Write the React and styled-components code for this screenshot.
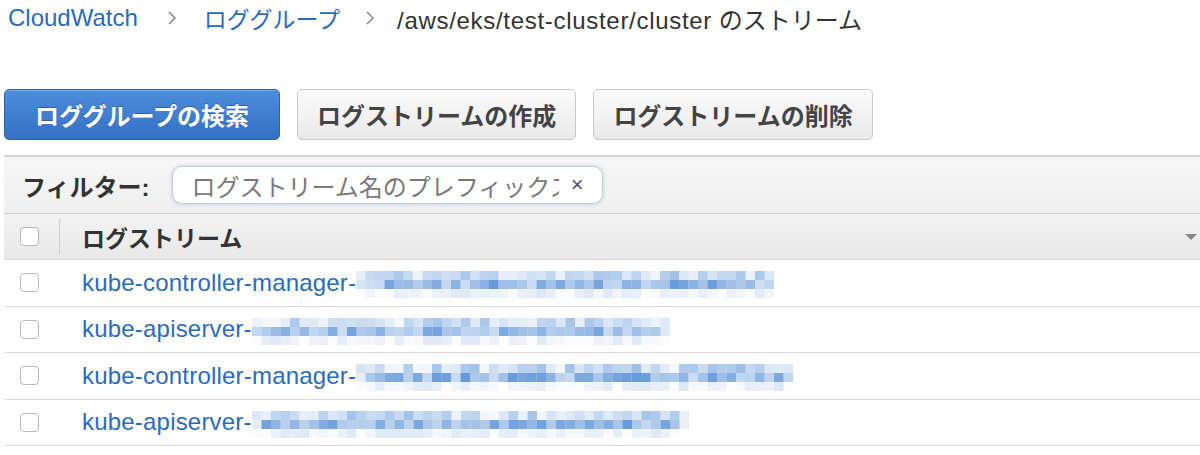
import React from "react";
import styled, { createGlobalStyle } from "styled-components";

const GlobalStyle = createGlobalStyle`
  html, body {
    margin: 0;
    background: #fff;
    overflow: hidden;
  }
  body {
    font-family: "Liberation Sans", "Noto Sans CJK JP", sans-serif;
    color: #333;
  }
`;

const Page = styled.div`
  width: 1200px;
  height: 455px;
  overflow: hidden;
`;

const Breadcrumb = styled.nav`
  display: flex;
  align-items: center;
  height: 36px;
  padding-left: 8px;
  font-size: 24px;
  white-space: nowrap;
`;

const Crumb = styled.a`
  font-size: ${(p) => p.$size || 24}px;
  color: ${(p) => (p.$current ? "#333" : "#2a6bc0")};
  text-decoration: none;
`;

const LogPath = styled.span`
  letter-spacing: 0.7px;
`;

const Sep = styled.span`
  display: inline-flex;
  width: 12px;
  margin: 0 ${(p) => p.$right || 26}px 0 ${(p) => p.$left || 28}px;
  color: #888;
`;

const Toolbar = styled.div`
  display: flex;
  gap: 17px;
  margin: 53px 0 0 4px;
`;

const Button = styled.button`
  height: 51px;
  padding: 0 ${(p) => (p.$primary ? 30 : 19)}px;
  border-radius: 5px;
  font-family: "Liberation Sans", "Noto Sans CJK JP", sans-serif;
  font-size: 24px;
  font-weight: 700;
  cursor: pointer;
  color: ${(p) => (p.$primary ? "#fff" : "#444")};
  border: 1px solid ${(p) => (p.$primary ? "#2d63ad" : "#c9c9c9")};
  background: ${(p) =>
    p.$primary
      ? "linear-gradient(#4d8ddb, #3470c4)"
      : "linear-gradient(#fbfbfb, #e9e9e9)"};
  text-shadow: ${(p) => (p.$primary ? "0 -1px 0 rgba(0,0,0,0.25)" : "none")};
  box-shadow: ${(p) =>
    p.$primary ? "inset 0 1px 0 rgba(255,255,255,0.25)" : "inset 0 1px 0 #fff"};
`;

const Table = styled.div`
  margin: 15px 0 0 4px;
  width: 1210px;
`;

const FilterBar = styled.div`
  display: flex;
  align-items: center;
  height: 56px;
  padding-left: 18px;
  border-top: 2px solid #d3d3d3;
  background: linear-gradient(#f7f7f7, #efefef);
`;

const FilterLabel = styled.span`
  font-size: 24px;
  font-weight: 700;
  color: #333;
`;

const SearchBox = styled.div`
  display: flex;
  align-items: center;
  width: 431px;
  height: 38px;
  margin-left: 22px;
  padding: 0 18px 0 19px;
  box-sizing: border-box;
  background: #fff;
  border: 1px solid #c5cdd8;
  border-radius: 10px;
  box-shadow: 0 0 4px rgba(120, 160, 220, 0.45);
`;

const Placeholder = styled.span`
  flex: 1;
  min-width: 0;
  overflow: hidden;
  white-space: nowrap;
  font-size: 24px;
  color: #7a7a7a;
`;

const Clear = styled.span`
  margin-left: 12px;
  font-size: 22px;
  color: #555;
`;

const HeaderRow = styled.div`
  display: flex;
  align-items: center;
  height: 45px;
  border-top: 1px solid #cfcfcf;
  border-bottom: 1px solid #d9d9d9;
  background: linear-gradient(#f3f3f3, #e8e8e8);
  position: relative;
`;

const CheckCell = styled.div`
  display: flex;
  align-items: center;
  width: 56px;
  padding-left: 16px;
  box-sizing: border-box;
  align-self: stretch;
  border-right: ${(p) => (p.$divider ? "1px solid #cfcfcf" : "none")};
  margin: ${(p) => (p.$divider ? "5px 0" : "0")};
`;

const Box = styled.span`
  display: inline-block;
  width: 19px;
  height: 19px;
  box-sizing: border-box;
  border: 1px solid #b9b9b9;
  border-radius: 4px;
  background: #fff;
`;

const HeaderTitle = styled.span`
  margin-left: 22px;
  font-size: 23px;
  font-weight: 700;
  color: #333;
`;

const SortArrow = styled.span`
  position: absolute;
  right: 17px;
  top: 20px;
  width: 0;
  height: 0;
  border-left: 6px solid transparent;
  border-right: 6px solid transparent;
  border-top: 6px solid #888;
`;

const Row = styled.div`
  display: flex;
  align-items: center;
  height: 45.5px;
  border-bottom: 1px solid #dcdcdc;
`;

const StreamLink = styled.a`
  display: inline-flex;
  align-items: center;
  margin-left: 22px;
  font-size: 24px;
  letter-spacing: 0.2px;
  color: #2a6bc0;
  text-decoration: none;
  white-space: nowrap;
`;

function Chevron() {
  return (
    <svg width="12" height="16" viewBox="0 0 12 16">
      <path d="M3 2 L9 8 L3 14" fill="none" stroke="#8a8a8a" strokeWidth="1.6" />
    </svg>
  );
}

// seeded random so the pixelated id stays the same every render
function rng(seed) {
  let a = seed;
  return () => {
    a |= 0;
    a = (a + 0x6d2b79f5) | 0;
    let t = Math.imul(a ^ (a >>> 15), 1 | a);
    t = (t + Math.imul(t ^ (t >>> 7), 61 | t)) ^ t;
    return ((t ^ (t >>> 14)) >>> 0) / 4294967296;
  };
}

function Mosaic({ width, seed }) {
  const cell = 9.5;
  const cols = Math.round(width / cell);
  const rand = rng(seed);
  const ranges = [
    [0.05, 0.5],
    [0.25, 0.8],
    [0.0, 0.18],
  ];
  const cells = [];
  ranges.forEach(([lo, hi], r) => {
    for (let c = 0; c < cols; c++) {
      const edge = c === 0 || c === cols - 1 ? 0.45 : 1;
      const op = (lo + rand() * (hi - lo)) * edge;
      cells.push(
        <rect
          key={r + "-" + c}
          x={c * cell}
          y={r * 9}
          width={cell}
          height={9}
          fill="#3f7fd0"
          fillOpacity={op.toFixed(2)}
        />
      );
    }
  });
  return (
    <svg width={cols * cell} height="27" style={{ marginTop: 4 }}>
      {cells}
    </svg>
  );
}

const streams = [
  { name: "kube-controller-manager-", width: 418, seed: 11 },
  { name: "kube-apiserver-", width: 419, seed: 27 },
  { name: "kube-controller-manager-", width: 436, seed: 43 },
  { name: "kube-apiserver-", width: 438, seed: 71 },
];

export default function App() {
  return (
    <Page>
      <GlobalStyle />
      <Breadcrumb>
        <Crumb href="#">CloudWatch</Crumb>
        <Sep>
          <Chevron />
        </Sep>
        <Crumb href="#" $size={23}>ロググループ</Crumb>
        <Sep $left={24} $right={21}>
          <Chevron />
        </Sep>
        <Crumb $current>
          <LogPath>/aws/eks/test-cluster/cluster</LogPath> のストリーム
        </Crumb>
      </Breadcrumb>

      <Toolbar>
        <Button $primary>ロググループの検索</Button>
        <Button>ログストリームの作成</Button>
        <Button>ログストリームの削除</Button>
      </Toolbar>

      <Table>
        <FilterBar>
          <FilterLabel>フィルター:</FilterLabel>
          <SearchBox>
            <Placeholder>ログストリーム名のプレフィックス</Placeholder>
            <Clear>×</Clear>
          </SearchBox>
        </FilterBar>
        <HeaderRow>
          <CheckCell $divider>
            <Box />
          </CheckCell>
          <HeaderTitle>ログストリーム</HeaderTitle>
          <SortArrow />
        </HeaderRow>
        {streams.map((s, i) => (
          <Row key={i}>
            <CheckCell>
              <Box />
            </CheckCell>
            <StreamLink href="#">
              {s.name}
              <Mosaic width={s.width} seed={s.seed} />
            </StreamLink>
          </Row>
        ))}
      </Table>
    </Page>
  );
}
